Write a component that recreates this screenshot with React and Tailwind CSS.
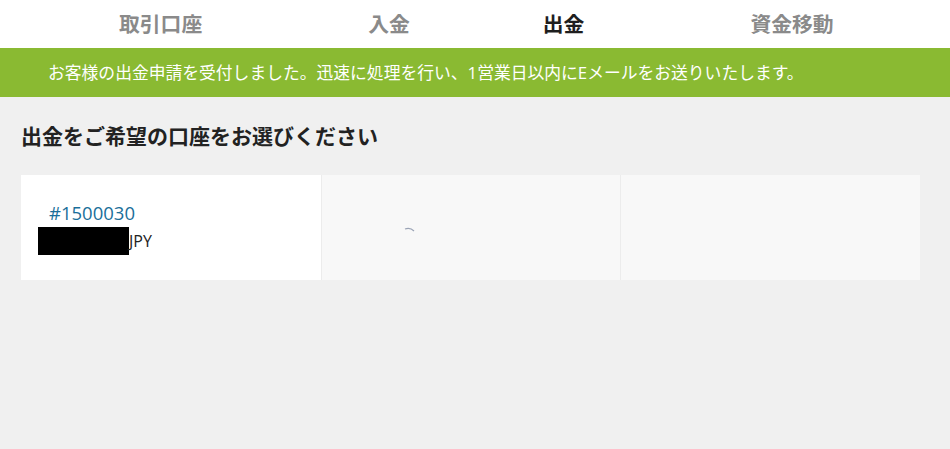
const tabs = [
  { label: "取引口座", gap: "ml-0" },
  { label: "入金", gap: "ml-[166px]" },
  { label: "出金", gap: "ml-[133px]", active: true },
  { label: "資金移動", gap: "ml-[166px]" },
];

const Spinner = () => (
  <svg width="12" height="6" viewBox="0 0 12 6" className="block">
    <path d="M1 2 Q6 0 10 4" fill="none" stroke="#9aa3b5" strokeWidth="1.2" />
  </svg>
);

export default function App() {
  return (
    <div
      className="w-[950px] h-[449px] bg-[#f0f0f0] overflow-hidden"
      style={{ fontFamily: '"Open Sans", "Noto Sans CJK JP", sans-serif' }}
    >
      <nav className="h-[48px] bg-white flex items-center pl-[119px]">
        {tabs.map((t) => (
          <span
            key={t.label}
            className={`${t.gap} text-[20.8px] font-bold leading-none ${
              t.active ? "text-[#1e1e1e]" : "text-[#8a8a8a]"
            }`}
          >
            {t.label}
          </span>
        ))}
      </nav>

      <div className="h-[49px] bg-[#8aba32] flex items-center pl-[48px] text-white text-[16.8px]">
        お客様の出金申請を受付しました。迅速に処理を行い、1営業日以内にEメールをお送りいたします。
      </div>

      <div className="px-[21px] pt-[26px]">
        <h2 className="text-[21px] font-bold text-[#222] leading-[26px]">
          出金をご希望の口座をお選びください
        </h2>

        <div className="mt-[26px] grid grid-cols-3 h-[105px] w-[899px]">
          <div className="bg-white pl-[28px] pt-[26px]">
            <div className="text-[#1a6f9a] text-[18.5px] leading-[24px]">#1500030</div>
            <div className="flex items-center -ml-[11px] mt-[2px] text-[16px] text-[#222]">
              <span className="inline-block w-[91px] h-[28px] bg-black" />
              <span>JPY</span>
            </div>
          </div>
          <div className="bg-[#f8f8f8] border-l border-[#ececec] flex items-center pl-[82px] pt-[4px]">
            <Spinner />
          </div>
          <div className="bg-[#f8f8f8] border-l border-[#ececec]" />
        </div>
      </div>
    </div>
  );
}
